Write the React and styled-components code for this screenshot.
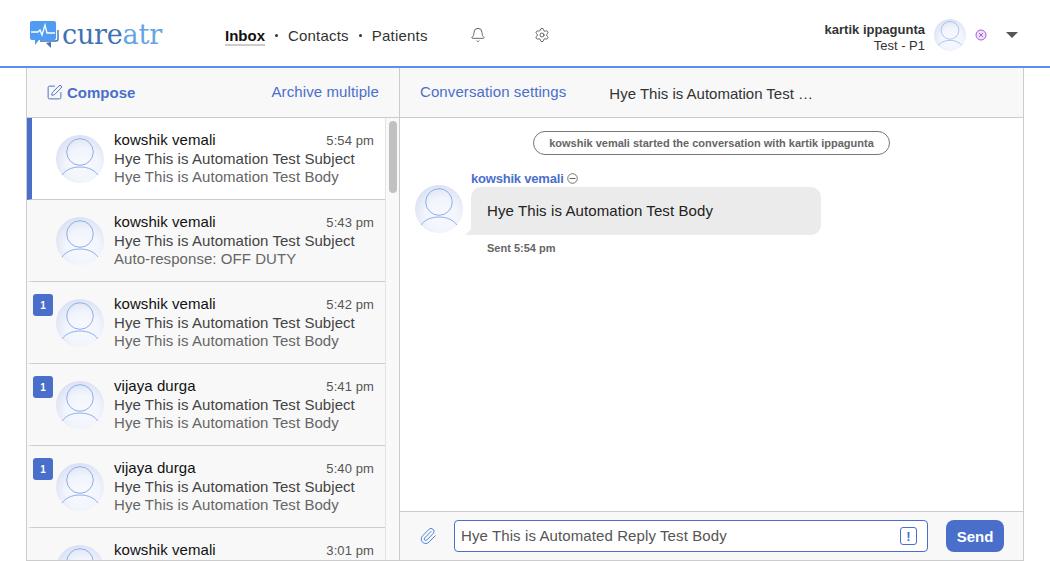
import React from 'react';
import styled, {createGlobalStyle} from 'styled-components';
import {Bell, Settings, Paperclip, SquarePen} from 'lucide-react';

const GlobalStyle = createGlobalStyle`
  html, body {
    margin: 0;
    padding: 0;
    height: 561px;
    overflow: hidden;
    background: #fff;
    font-family: "Liberation Sans", Arial, sans-serif;
  }
  * { box-sizing: border-box; }
`;

const Page = styled.div`
  width: 1050px;
  height: 561px;
  display: flex;
  flex-direction: column;
  overflow: hidden;
`;

const Header = styled.header`
  height: 68px;
  flex: none;
  display: flex;
  align-items: center;
  border-bottom: 2px solid #5c8df0;
  padding: 4px 30px 0 30px;
`;

const Logo = styled.div`
  display: flex;
  align-items: center;
  width: 195px;
  height: 32px;
  margin-top: -1px;
  gap: 2px;
`;

const LogoText = styled.span`
  font-family: "DejaVu Serif", serif;
  font-size: 27px;
  letter-spacing: -0.2px;
  color: #3f72b5;
  span { color: #64a4e6; }
`;

const Nav = styled.nav`
  display: flex;
  align-items: center;
  font-size: 15px;
  letter-spacing: 0.2px;
  color: #333;
`;

const NavLink = styled.span`
  font-weight: ${p => (p.$active ? 700 : 400)};
  letter-spacing: ${p => (p.$active ? 0 : '0.2px')};
  color: ${p => (p.$active ? '#111' : '#333')};
  border-bottom: 2px solid ${p => (p.$active ? '#ccc' : 'transparent')};
  line-height: 17px;
  padding-top: 2px;
`;

const NavDot = styled.span`
  width: 3px;
  height: 3px;
  border-radius: 50%;
  background: #333;
  margin: 0 10px;
`;

const NavIcons = styled.div`
  display: flex;
  align-items: center;
  gap: 48px;
  margin-left: 42px;
  color: #444;
`;

const UserArea = styled.div`
  margin-left: auto;
  display: flex;
  align-items: center;
  margin-right: 2px;
`;

const UserText = styled.div`
  text-align: right;
  font-size: 13px;
  line-height: 16px;
  color: #333;
  margin-right: 9px;
  margin-top: 5px;
  b { display: block; font-weight: 700; }
`;

const StatusIcon = styled.svg`
  margin: 0 0 0 9px;
`;

const Caret = styled.span`
  width: 0;
  height: 0;
  border-left: 6px solid transparent;
  border-right: 6px solid transparent;
  border-top: 6px solid #555;
  margin-left: 19px;
`;

const Main = styled.main`
  flex: 1;
  min-height: 0;
  width: 998px;
  margin-left: 26px;
  display: flex;
  border-left: 1px solid #ccc;
  border-right: 1px solid #ccc;
  border-bottom: 1px solid #ccc;
`;

const Sidebar = styled.aside`
  width: 373px;
  flex: none;
  display: flex;
  flex-direction: column;
  border-right: 1px solid #ccc;
  min-height: 0;
`;

const TopBar = styled.div`
  height: 50px;
  flex: none;
  display: flex;
  align-items: center;
  background: #f8f8f8;
  border-bottom: 1px solid #ccc;
`;

const SideTop = styled(TopBar)`
  justify-content: space-between;
  padding: 0 20px 0 19px;
`;

const ComposeButton = styled.span`
  display: flex;
  align-items: center;
  gap: 4px;
  color: #4a6fcb;
  font-weight: 700;
  font-size: 15px;
`;

const BlueLink = styled.span`
  color: #4a6fcb;
  font-size: 15px;
  letter-spacing: 0.1px;
  margin-top: -2px;
`;

const ListWrap = styled.div`
  flex: 1;
  min-height: 0;
  display: flex;
  overflow: hidden;
`;

const List = styled.div`
  flex: 1;
  min-width: 0;
`;

const Row = styled.div`
  position: relative;
  height: 82px;
  display: flex;
  background: ${p => (p.$selected ? '#fff' : '#f8f8f8')};
  border-bottom: 1px solid #ccc;
  border-left: 5px solid ${p => (p.$selected ? '#4a6fcb' : 'transparent')};
  padding: 17px 11px 0 24px;
`;

const Badge = styled.span`
  position: absolute;
  left: 1px;
  top: 12px;
  width: 20px;
  height: 22px;
  border-radius: 3px;
  background: #4a6fcb;
  color: #fff;
  font-size: 10px;
  font-weight: 700;
  display: flex;
  align-items: center;
  justify-content: center;
`;

const AvatarSvg = styled.svg`
  flex: none;
  display: block;
`;

const RowBody = styled.div`
  flex: 1;
  min-width: 0;
  margin-left: 10px;
  margin-top: -4px;
  font-size: 15px;
  line-height: 18px;
  letter-spacing: 0.06px;
`;

const RowHead = styled.div`
  display: flex;
  justify-content: space-between;
  align-items: baseline;
  color: #111;
`;

const RowTime = styled.span`
  font-size: 13px;
  letter-spacing: 0.1px;
  color: #555;
`;

const Subject = styled.div`
  color: #444;
  white-space: nowrap;
`;

const Preview = styled.div`
  color: #666;
  white-space: nowrap;
`;

const Scrollbar = styled.div`
  width: 14px;
  flex: none;
  background: #f9f9f9;
  border-left: 1px solid #e4e4e4;
  padding: 3px 3px 0 3px;
`;

const ScrollThumb = styled.div`
  width: 8px;
  height: 72px;
  border-radius: 4px;
  background: #c1c1c1;
`;

const Conversation = styled.section`
  flex: 1;
  min-width: 0;
  display: flex;
  flex-direction: column;
`;

const ConvTop = styled(TopBar)`
  padding-left: 20px;
`;

const ConvTitle = styled.span`
  font-size: 15px;
  color: #333;
  margin-left: 43px;
  margin-top: 1px;
`;

const Messages = styled.div`
  flex: 1;
  min-height: 0;
  display: flex;
  flex-direction: column;
  padding: 13px 15px 0;
  background: #fff;
`;

const SystemPill = styled.div`
  align-self: center;
  height: 24px;
  padding: 0 15px;
  border: 1px solid #777;
  border-radius: 12px;
  font-size: 11px;
  font-weight: 700;
  color: #666;
  display: flex;
  align-items: center;
`;

const MessageRow = styled.div`
  display: flex;
  gap: 8px;
  margin-top: 15px;
`;

const AvatarCol = styled.div`
  padding-top: 15px;
`;

const MessageBody = styled.div`
  display: flex;
  flex-direction: column;
`;

const Sender = styled.div`
  display: flex;
  align-items: center;
  gap: 3px;
  font-size: 13px;
  letter-spacing: -0.2px;
  font-weight: 700;
  color: #4a6fcb;
  height: 15px;
  padding-top: 1px;
`;

const Bubble = styled.div`
  position: relative;
  width: 350px;
  height: 48px;
  margin-top: 2px;
  padding-bottom: 2px;
  background: #ebebeb;
  border-radius: 10px 10px 10px 0;
  padding-left: 16px;
  display: flex;
  align-items: center;
  font-size: 15px;
  letter-spacing: 0.1px;
  color: #222;
  &::before {
    content: '';
    position: absolute;
    left: -6px;
    bottom: 0;
    width: 0;
    height: 0;
    border-bottom: 6px solid #ebebeb;
    border-left: 6px solid transparent;
  }
`;

const SentAt = styled.div`
  font-size: 11px;
  font-weight: 700;
  color: #666;
  margin: 7px 0 0 16px;
`;

const Composer = styled.div`
  height: 49px;
  flex: none;
  display: flex;
  align-items: center;
  background: #f8f8f8;
  border-top: 1px solid #ccc;
  padding: 0 19px 0 19px;
  color: #4a7fd8;
`;

const InputBox = styled.div`
  width: 474px;
  height: 32px;
  margin-left: 17px;
  background: #fff;
  border: 1px solid #4a6fcb;
  border-radius: 4px;
  display: flex;
  align-items: center;
  justify-content: space-between;
  padding: 0 10px 0 6px;
  font-size: 15px;
  color: #555;
`;

const DraftText = styled.span`
  letter-spacing: 0.1px;
  margin-top: -2px;
`;

const Urgent = styled.span`
  width: 17px;
  height: 18px;
  border: 1px solid #4a6fcb;
  border-radius: 3px;
  color: #4a6fcb;
  font-size: 13px;
  font-weight: 700;
  display: flex;
  align-items: center;
  justify-content: center;
`;

const SendButton = styled.button`
  width: 58px;
  height: 32px;
  margin-left: 18px;
  border: none;
  border-radius: 8px;
  background: #4a6fcb;
  color: #fff;
  font: 700 15px "Liberation Sans", Arial, sans-serif;
`;

function Avatar({size = 48}) {
  return (
    <AvatarSvg width={size} height={size} viewBox="0 0 48 48">
      <defs>
        <radialGradient id="av" cx="55%" cy="62%" r="62%">
          <stop offset="0%" stopColor="#f7f9fe" />
          <stop offset="55%" stopColor="#f2f5fc" />
          <stop offset="100%" stopColor="#dbe2f3" />
        </radialGradient>
        <clipPath id="avClip"><circle cx="24" cy="24" r="24" /></clipPath>
      </defs>
      <circle cx="24" cy="24" r="24" fill="url(#av)" />
      <g clipPath="url(#avClip)" fill="none" stroke="#8fadea" strokeWidth="1">
        <circle cx="24" cy="17" r="13.300" />
        <path d="M6 40c3.500-5 10-8 18-8s14.500 3 18 8" />
      </g>
    </AvatarSvg>
  );
}

function LogoMark() {
  return (
    <svg width="30" height="28" viewBox="0 0 30 28">
      <path d="M10 20h16a2 2 0 0 0 2-2V9" fill="none" stroke="#3f72b5" strokeWidth="1.400" />
      <path d="M21 21v6l-5-5z" fill="#3f72b5" />
      <path d="M2 0h22a2 2 0 0 1 2 2v15a2 2 0 0 1-2 2H9l-4 5v-5H2a2 2 0 0 1-2-2V2a2 2 0 0 1 2-2z" fill="#4f9cf2" />
      <path d="M1 11h7l2-2 2 5 3-10 2 8h8" fill="none" stroke="#fff" strokeWidth="1.300" />
    </svg>
  );
}

const rows = [
  {name: 'kowshik vemali', time: '5:54 pm', preview: 'Hye This is Automation Test Body', selected: true},
  {name: 'kowshik vemali', time: '5:43 pm', preview: 'Auto-response: OFF DUTY'},
  {name: 'kowshik vemali', time: '5:42 pm', preview: 'Hye This is Automation Test Body', unread: 1},
  {name: 'vijaya durga', time: '5:41 pm', preview: 'Hye This is Automation Test Body', unread: 1},
  {name: 'vijaya durga', time: '5:40 pm', preview: 'Hye This is Automation Test Body', unread: 1},
  {name: 'kowshik vemali', time: '3:01 pm'},
];

function App() {
  return (
    <Page>
      <GlobalStyle />
      <Header>
        <Logo>
          <LogoMark />
          <LogoText>cure<span>atr</span></LogoText>
        </Logo>
        <Nav>
          <NavLink $active>Inbox</NavLink>
          <NavDot />
          <NavLink>Contacts</NavLink>
          <NavDot />
          <NavLink>Patients</NavLink>
        </Nav>
        <NavIcons>
          <Bell size={16} strokeWidth={1.2} />
          <Settings size={16} strokeWidth={1.2} />
        </NavIcons>
        <UserArea>
          <UserText><b>kartik ippagunta</b>Test - P1</UserText>
          <Avatar size={32} />
          <StatusIcon width="12" height="12" viewBox="0 0 12 12">
            <circle cx="6" cy="6" r="5" fill="#efe3fa" stroke="#a45ee0" />
            <path d="M4 4l4 4M8 4l-4 4" stroke="#a45ee0" />
          </StatusIcon>
          <Caret />
        </UserArea>
      </Header>
      <Main>
        <Sidebar>
          <SideTop>
            <ComposeButton><SquarePen size={17} strokeWidth={1.4} />Compose</ComposeButton>
            <BlueLink>Archive multiple</BlueLink>
          </SideTop>
          <ListWrap>
            <List>
              {rows.map((r, i) => (
                <Row key={i} $selected={r.selected}>
                  {r.unread && <Badge>{r.unread}</Badge>}
                  <Avatar />
                  <RowBody>
                    <RowHead>{r.name}<RowTime>{r.time}</RowTime></RowHead>
                    {r.preview && <Subject>Hye This is Automation Test Subject</Subject>}
                    {r.preview && <Preview>{r.preview}</Preview>}
                  </RowBody>
                </Row>
              ))}
            </List>
            <Scrollbar><ScrollThumb /></Scrollbar>
          </ListWrap>
        </Sidebar>
        <Conversation>
          <ConvTop>
            <BlueLink>Conversation settings</BlueLink>
            <ConvTitle>Hye This is Automation Test …</ConvTitle>
          </ConvTop>
          <Messages>
            <SystemPill>kowshik vemali started the conversation with kartik ippagunta</SystemPill>
            <MessageRow>
              <AvatarCol><Avatar /></AvatarCol>
              <MessageBody>
                <Sender>
                  kowshik vemali
                  <svg width="11" height="11" viewBox="0 0 11 11">
                    <circle cx="5.500" cy="5.500" r="4.800" fill="none" stroke="#666" strokeWidth="0.9" />
                    <path d="M2.500 5.500h6" stroke="#666" />
                  </svg>
                </Sender>
                <Bubble>Hye This is Automation Test Body</Bubble>
                <SentAt>Sent 5:54 pm</SentAt>
              </MessageBody>
            </MessageRow>
          </Messages>
          <Composer>
            <Paperclip size={18} strokeWidth={1.3} />
            <InputBox>
              <DraftText>Hye This is Automated Reply Test Body</DraftText>
              <Urgent>!</Urgent>
            </InputBox>
            <SendButton>Send</SendButton>
          </Composer>
        </Conversation>
      </Main>
    </Page>
  );
}

export default App;
